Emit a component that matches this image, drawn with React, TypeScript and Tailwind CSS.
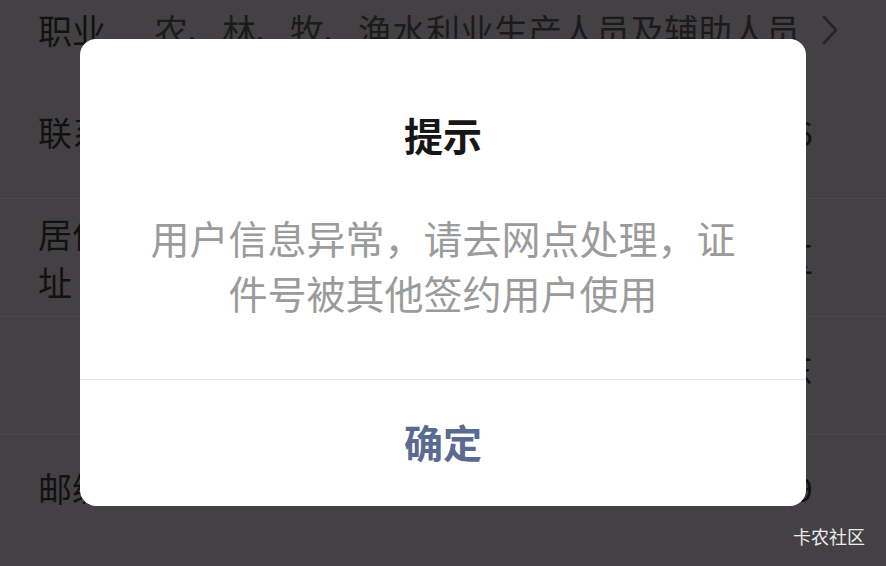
const cjk = "font-['Noto_Sans_CJK_SC','Noto_Sans',sans-serif]";

function Chevron() {
  return (
    <svg width="16" height="30" viewBox="0 0 16 30" fill="none" className="shrink-0">
      <path d="M2 2 L14 15 L2 28" stroke="#262526" strokeWidth="2.6" strokeLinecap="round" strokeLinejoin="round" />
    </svg>
  );
}

export default function App() {
  return (
    <div className={`relative h-[566px] w-[886px] overflow-hidden bg-[#434143] ${cjk}`}>
      {/* form under the mask */}
      <div className="flex flex-col text-[34px] leading-[34px] text-[#121112]">
        <div className="flex h-[80px] items-start pl-[38px] pr-[48px] pt-[13px]">
          <span className="w-[122px] whitespace-nowrap">职业</span>
          <span className="flex-1 whitespace-nowrap text-[#1c1b1c]">农、林、牧、渔水利业生产人员及辅助人员</span>
          <span className="ml-[22px] mt-[2px]"><Chevron /></span>
        </div>
        <div className="flex h-[118px] items-start pl-[38px] pr-[73px] pt-[35px]">
          <span className="w-[122px] whitespace-nowrap">联系电话</span>
          <span className="flex-1 whitespace-nowrap text-right">138****5566</span>
        </div>
        <div className="flex h-[118px] items-center border-t border-[#4a484a] pl-[38px] pr-[73px]">
          <span className="w-[122px] pr-[12px] leading-[48px]">居住地址</span>
          <span className="flex-1 whitespace-nowrap text-right">深圳市南山区</span>
        </div>
        <div className="flex h-[118px] items-center border-t border-[#4a484a] pl-[38px] pr-[73px] pb-[14px]">
          <span className="w-[122px]" />
          <span className="flex-1 whitespace-nowrap text-right">科技园东</span>
        </div>
        <div className="flex h-[120px] items-start border-t border-[#4a484a] pl-[38px] pr-[73px] pt-[36px]">
          <span className="w-[122px] whitespace-nowrap">邮编</span>
          <span className="flex-1 whitespace-nowrap text-right">518059</span>
        </div>
      </div>

      {/* dialog */}
      <div className="absolute left-[80px] top-[39px] flex h-[467px] w-[726px] flex-col overflow-hidden rounded-[16px] bg-white">
        <div className="flex flex-1 flex-col items-center pt-[75px]">
          <div className="text-[39px] font-semibold leading-[40px] text-[#161616]">提示</div>
          <div className="mt-[56px] px-[66px] text-center text-[39px] leading-[55px] text-[#9b9b9b]">
            用户信息异常，请去网点处理，证件号被其他签约用户使用
          </div>
        </div>
        <div className="flex h-[127px] items-center justify-center border-t border-[#e6e6e6] pb-[3px] text-[39px] font-semibold text-[#5a6a90]">
          确定
        </div>
      </div>

      <div className="absolute right-[21px] top-[524px] text-[18px] leading-[24px] text-[#ececec]">卡农社区</div>
    </div>
  );
}
